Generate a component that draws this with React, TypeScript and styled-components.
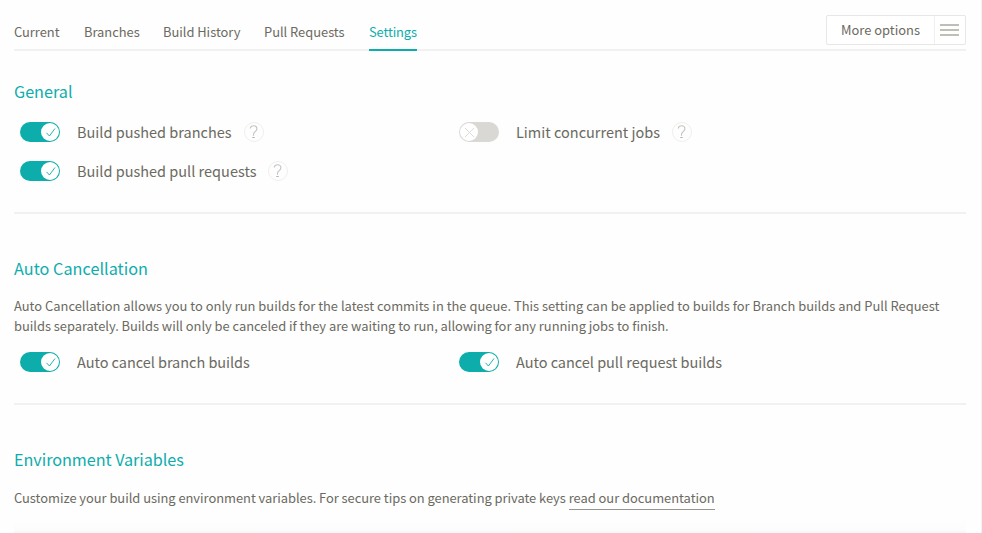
import React from "react";
import styled, { createGlobalStyle } from "styled-components";

const teal = "#0dadac";
const line = "#f1f1f1";

const GlobalStyle = createGlobalStyle`
  *, *::before, *::after { box-sizing: border-box; }
  body {
    margin: 0;
    background: #fefefe;
    color: #6b6a61;
    font-family: "Noto Sans CJK SC", "Noto Sans", sans-serif;
    font-size: 12.91px;
    line-height: 20px;
    overflow: hidden;
  }
`;

const Page = styled.main`
  width: 982px;
  height: 533px;
  padding: 14px 15px 0 14px;
  border-right: 1px solid ${line};
  overflow: hidden;
`;

const TopBar = styled.header`
  display: flex;
  justify-content: space-between;
  height: 37px;
  border-bottom: 2px solid ${line};
`;

const Tabs = styled.nav`
  display: flex;
  gap: 24px;
  height: 37px;
`;

const Tab = styled.a<{ $width: number; $active?: boolean }>`
  width: ${(p) => p.$width}px;
  padding-top: 8px;
  font-size: 12.9px;
  white-space: nowrap;
  letter-spacing: ${(p) => (p.$active ? "-0.11px" : "-0.02px")};
  color: ${(p) => (p.$active ? teal : "inherit")};
  border-bottom: 2px solid ${(p) => (p.$active ? teal : "transparent")};
`;

const OptionsButton = styled.button`
  display: flex;
  width: 140px;
  height: 30px;
  margin-top: 1px;
  padding: 0;
  border: 1px solid #e7e7e5;
  border-radius: 2px;
  background: #fff;
  color: inherit;
  font: inherit;
  line-height: 28px;
`;

const OptionsLabel = styled.span`
  width: 107px;
  padding-left: 14px;
  text-align: left;
  white-space: nowrap;
`;

const MenuMark = styled.span`
  display: flex;
  flex-direction: column;
  gap: 3px;
  width: 31px;
  height: 28px;
  padding: 8px 0 0 5px;
  border-left: 1px solid #efefed;
`;

const MenuBar = styled.i`
  width: 19px;
  height: 2px;
  background: #c0bfb6;
`;

const Section = styled.section<{ $height: number; $top: number }>`
  height: ${(p) => p.$height}px;
  padding-top: ${(p) => p.$top}px;
  border-bottom: 2px solid ${line};
`;

const LastSection = styled.section`
  padding-top: 42px;
`;

const Heading = styled.h2<{ $tracking?: number }>`
  margin: 0;
  color: ${teal};
  font-size: 16.2px;
  font-weight: 400;
  line-height: 24px;
  letter-spacing: ${(p) => p.$tracking ?? 0}px;
`;

const Paragraph = styled.p<{ $top: number }>`
  margin: ${(p) => p.$top}px 0 0;
  white-space: nowrap;
`;

const Line = styled.span<{ $tracking: number }>`
  letter-spacing: ${(p) => p.$tracking}px;
`;

const DocLink = styled.a`
  display: inline-block;
  height: 22px;
  border-bottom: 1px solid #96958e;
  letter-spacing: -0.02px;
`;

const SettingGrid = styled.div<{ $top: number }>`
  display: grid;
  grid-template-columns: 439px 1fr;
  grid-auto-rows: 20px;
  row-gap: 19px;
  margin-top: ${(p) => p.$top}px;
  padding-left: 6px;
`;

const Setting = styled.div`
  display: flex;
  align-items: center;
`;

const Track = styled.span<{ $on: boolean }>`
  display: flex;
  justify-content: ${(p) => (p.$on ? "flex-end" : "flex-start")};
  width: 40px;
  height: 20px;
  padding: 1px;
  border-radius: 10px;
  background: ${(p) => (p.$on ? teal : "#d9d8d4")};
`;

const Knob = styled.span`
  width: 18px;
  height: 18px;
  border-radius: 50%;
  background: #fff;
`;

const SettingName = styled.span<{ $tracking: number }>`
  margin-left: 17px;
  font-size: 14.5px;
  white-space: nowrap;
  letter-spacing: ${(p) => p.$tracking}px;
`;

const Help = styled.span`
  display: flex;
  width: 20px;
  height: 20px;
  margin-left: 12px;
  border: 1px solid #efefed;
  border-radius: 50%;
`;

const Panel = styled.div`
  height: 24px;
  margin-top: 10px;
  background: linear-gradient(#fefefe 0, #fcfcfc 10px, #f5f5f4 14px);
`;

function Switch({ on }: { on: boolean }) {
  return (
    <Track $on={on}>
      <Knob>
        <svg width="18" height="18" viewBox="0 0 18 18" fill="none" display="block">
          {on ? (
            <path d="M5.5 9.8 8.4 13 14 5.5" stroke={teal} strokeWidth="0.9" />
          ) : (
            <path d="m5 5 9 9M14 5l-9 9" stroke="#d9d8d4" strokeWidth="0.9" />
          )}
        </svg>
      </Knob>
    </Track>
  );
}

function HelpMark() {
  return (
    <Help>
      <svg width="18" height="18" viewBox="0 0 18 18" fill="none">
        <path
          d="M5.2 5.5C5.6 3.7 6.8 2.8 8.5 2.8c2 0 3.4 1.1 3.4 3 0 2.7-3.4 3-3.4 5.6v1.3"
          stroke="#c4c3bc"
          strokeWidth="1.1"
        />
        <path d="M7.2 14.5h2.6" stroke="#b9b8b0" strokeWidth="1" />
      </svg>
    </Help>
  );
}

interface OptionProps {
  name: string;
  on?: boolean;
  help?: boolean;
  tracking?: number;
}

function Option({ name, on = true, help, tracking = 0 }: OptionProps) {
  return (
    <Setting>
      <Switch on={on} />
      <SettingName $tracking={tracking}>{name}</SettingName>
      {help && <HelpMark />}
    </Setting>
  );
}

const tabs = [
  { name: "Current", width: 46 },
  { name: "Branches", width: 55 },
  { name: "Build History", width: 77 },
  { name: "Pull Requests", width: 81 },
  { name: "Settings", width: 48, active: true },
];

export default function App() {
  return (
    <>
      <GlobalStyle />
      <Page>
        <TopBar>
          <Tabs>
            {tabs.map((t) => (
              <Tab key={t.name} $width={t.width} $active={t.active}>
                {t.name}
              </Tab>
            ))}
          </Tabs>
          <OptionsButton>
            <OptionsLabel>More options</OptionsLabel>
            <MenuMark>
              <MenuBar />
              <MenuBar />
              <MenuBar />
            </MenuMark>
          </OptionsButton>
        </TopBar>
        <Section $height={163} $top={28}>
          <Heading>General</Heading>
          <SettingGrid $top={19}>
            <Option name="Build pushed branches" help />
            <Option name="Limit concurrent jobs" on={false} help />
            <Option name="Build pushed pull requests" help />
          </SettingGrid>
        </Section>
        <Section $height={191} $top={42}>
          <Heading $tracking={0.04}>Auto Cancellation</Heading>
          <Paragraph $top={16}>
            <Line $tracking={0.008}>
              Auto Cancellation allows you to only run builds for the latest commits in the queue. This
              setting can be applied to builds for Branch builds and Pull Request
            </Line>
            <br />
            <Line $tracking={-0.03}>
              builds separately. Builds will only be canceled if they are waiting to run, allowing for
              any running jobs to finish.
            </Line>
          </Paragraph>
          <SettingGrid $top={16}>
            <Option name="Auto cancel branch builds" tracking={-0.04} />
            <Option name="Auto cancel pull request builds" tracking={-0.03} />
          </SettingGrid>
        </Section>
        <LastSection>
          <Heading $tracking={-0.04}>Environment Variables</Heading>
          <Paragraph $top={17}>
            <Line $tracking={-0.034}>
              Customize your build using environment variables. For secure tips on generating private
              keys{" "}
            </Line>
            <DocLink>read our documentation</DocLink>
          </Paragraph>
          <Panel />
        </LastSection>
      </Page>
    </>
  );
}
